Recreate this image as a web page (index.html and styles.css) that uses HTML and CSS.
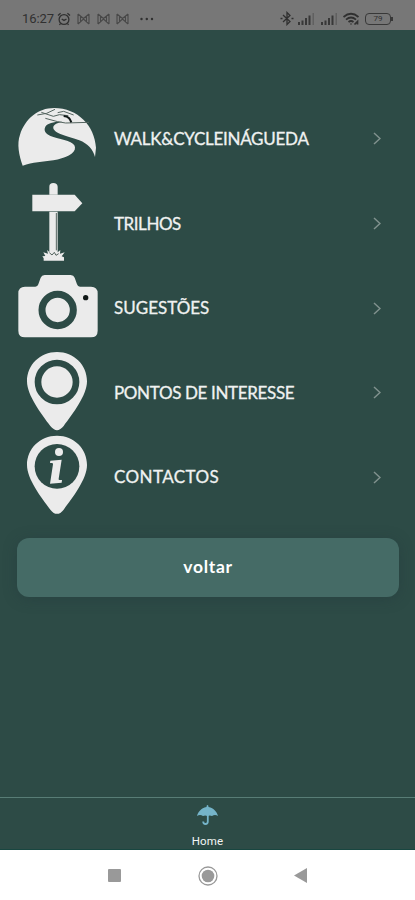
FILE: index.html
```html
<!DOCTYPE html>
<html lang="pt">
  <head>
    <meta charset="UTF-8" />
    <meta name="viewport" content="width=device-width, initial-scale=1.0" />
    <title>Walk&amp;CycleInÁgueda</title>
    <link rel="stylesheet" href="styles.css">
  </head>
  <body>
    <header class="status-bar">
      <span class="time">16:27</span>
      <svg class="alarm" viewBox="0 0 14 14" width="14" height="14">
        <circle cx="7" cy="7.5" r="4.9" />
        <path d="M1 3.6 3.6 1.3M10.4 1.3 13 3.6M4.7 7l2.3 1.4L9.5 7M3.5 11.5l-1 1.5M10.5 11.5l1 1.5" />
      </svg>
      <span class="mails">
        <svg viewBox="0 0 13 12" width="13" height="12"><path d="M1 1v10M12 1v10M1 1l5.5 4.5L12 1M1 11l5.5-5L12 11M3.5 3v7M9.5 3v7" /></svg>
        <svg viewBox="0 0 13 12" width="13" height="12"><path d="M1 1v10M12 1v10M1 1l5.5 4.5L12 1M1 11l5.5-5L12 11M3.5 3v7M9.5 3v7" /></svg>
        <svg viewBox="0 0 13 12" width="13" height="12"><path d="M1 1v10M12 1v10M1 1l5.5 4.5L12 1M1 11l5.5-5L12 11M3.5 3v7M9.5 3v7" /></svg>
      </span>
      <svg class="dots" viewBox="0 0 14 4" width="14" height="4">
        <circle cx="1.5" cy="2" r="1.2" /><circle cx="6.8" cy="2" r="1.2" /><circle cx="12" cy="2" r="1.2" />
      </svg>
      <div class="status-right">
        <svg class="bluetooth" viewBox="0 0 14 15" width="14" height="15">
          <path d="M3 4l7 6.5-3 3v-12l3 3L3 11" /><path d="M.5 7.500h2M11.500 7.500h2" />
        </svg>
        <svg class="signal" viewBox="0 0 18 12" width="18" height="12">
          <path d="M1 9h2v3H1zM4.5 7.5h2V12h-2zM8 5h2v7H8zM11.5 2.5h2V12h-2z" /><path class="weak" d="M15.5 0H17v12h-1.5z" />
        </svg>
        <svg class="signal" viewBox="0 0 18 12" width="18" height="12">
          <path d="M1 9h2v3H1zM4.5 7.5h2V12h-2zM8 5h2v7H8zM11.5 2.5h2V12h-2z" /><path class="weak" d="M15.5 0H17v12h-1.5z" />
        </svg>
        <svg class="wifi" viewBox="0 0 18 14" width="18" height="14">
          <path d="M1.5 5Q9-1.500 16.500 5M4 7.600q5-4.200 10 0M6.500 10q2.500-2 5 0" /><path d="M9 11.500v1M12.500 12.500l3-3v3" />
        </svg>
        <span class="battery">79</span>
      </div>
    </header>

    <main class="content">
      <nav class="menu">
        <a class="menu-item" href="#">
          <svg class="icon" viewBox="21 12 240 240">
            <path d="M38 212C27 181 20 146 30 119 45 72 84 39 132 39c72 0 122 54 126 119l-3 28c-5-22-22-40-47-50-22-8-41-13-57-19-13-6-23-13-21-22 2-7 12-12 27-15-22-1-45 4-51 15-7 14 4 24 22 30 32 10 66 14 67 32 2 20-30 33-65 39-32 5-62 6-92 16z" />
            <path class="line" d="M82 60l28-5 25-12M94 52l36 12 18-5 27 3M106 70l37 10 24 4 70-2M143 53l18-4 30 11" />
            <path class="dark-line" d="M161 63c17 2 19 10 23 19" />
          </svg>
          <span class="label walk">WALK&amp;CYCLEINÁGUEDA</span>
          <svg class="chevron" viewBox="0 0 8 13"><path d="M1 1l6 5.5L1 12" /></svg>
        </a>
        <a class="menu-item" href="#">
          <svg class="icon" viewBox="21 26 240 240">
            <path d="M118 58V34q0-11 12-11t13 11v24z" />
            <path d="M67 58h127l23 26-23 24H67z" />
            <path d="M118 109h25v122l8-7-1 11 14-4-9 12 7 3v10h-61v-7l-4-6 9-1-6-11 14 4-3-11 7 6z" />
            <path class="line" d="M139 113v112M118 232l8 7 7-8 5 9 8-5" />
          </svg>
          <span class="label trilhos">TRILHOS</span>
          <svg class="chevron" viewBox="0 0 8 13"><path d="M1 1l6 5.5L1 12" /></svg>
        </a>
        <a class="menu-item" href="#">
          <svg class="icon" viewBox="21 10 240 240">
            <path d="M45 66h31q7 0 9-7l7-20q3-8 12-8h78q9 0 12 8l7 20q2 7 9 7h33q20 0 20 20v112q0 20-20 20H45q-20 0-20-20V86q0-20 20-20z" />
            <circle class="ring" cx="143" cy="136" r="47" />
            <circle class="dot" cx="227" cy="99" r="8" />
          </svg>
          <span class="label sugestoes">SUGESTÕES</span>
          <svg class="chevron" viewBox="0 0 8 13"><path d="M1 1l6 5.5L1 12" /></svg>
        </a>
        <a class="menu-item" href="#">
          <svg class="icon" viewBox="21 23 240 240">
            <path d="M141 20c51 0 90 39 90 88 0 42-43 98-70 134q-20 25-40 0C94 206 51 150 51 108c0-49 39-88 90-88z" />
            <circle class="ring thin" cx="141" cy="110" r="57" />
          </svg>
          <span class="label pontos">PONTOS DE INTERESSE</span>
          <svg class="chevron" viewBox="0 0 8 13"><path d="M1 1l6 5.5L1 12" /></svg>
        </a>
        <a class="menu-item" href="#">
          <svg class="icon" viewBox="21 22 240 240">
            <path d="M141 18c51 0 90 39 90 88 0 42-43 98-70 134q-20 25-40 0C94 204 51 148 51 106c0-49 39-88 90-88z" />
            <circle class="hole" cx="141" cy="110" r="67" />
            <circle cx="147" cy="67" r="12" />
            <path d="M121 93l34-3-9 57q-1 4 3 4h7l-1 8-35 3 9-58q1-4-4-4h-5z" />
          </svg>
          <span class="label contactos">CONTACTOS</span>
          <svg class="chevron" viewBox="0 0 8 13"><path d="M1 1l6 5.5L1 12" /></svg>
        </a>
      </nav>
      <button class="back-btn">voltar</button>
    </main>

    <footer class="tab-bar">
      <svg viewBox="0 0 21 20" width="21" height="20">
        <path d="M10.5 0q1 0 1 2C17 3 20 7 21 11q-3-2-6 0-2-1-4.500 0Q8 10 6 11q-3-2-6 0C1 7 4 3 9.500 2q0-2 1-2z" />
        <path class="handle" d="M10.800 10v6.500q0 2.500-2.300 2.500t-2.300-2.500" />
      </svg>
      <span>Home</span>
    </footer>

    <div class="system-nav">
      <svg viewBox="0 0 13 13" width="13" height="13"><rect width="13" height="13" rx="1" /></svg>
      <svg viewBox="0 0 20 20" width="20" height="20"><circle class="outer" cx="10" cy="10" r="9" /><circle cx="10" cy="10" r="6.300" /></svg>
      <svg viewBox="0 0 13 15" width="13" height="15"><path d="M0 7.500 13 0v15z" /></svg>
    </div>
  </body>
</html>
```
FILE: styles.css
```css
* {
  box-sizing: border-box;
  margin: 0;
  padding: 0;
}
body {
  display: flex;
  flex-direction: column;
  height: 900px;
  overflow: hidden;
  background: #2d4b46;
  font-family: Lato, 'Open Sans', sans-serif;
}
.status-bar {
  display: flex;
  align-items: center;
  height: 30px;
  padding: 7px 24px 0 22px;
  background: #777;
  color: #303030;
}
.status-bar svg {
  display: block;
  fill: none;
  stroke: #303030;
  stroke-width: 1.3;
}
.time {
  width: 35px;
  font: 13px/16px Roboto, sans-serif;
  letter-spacing: -0.1px;
}
.mails {
  display: flex;
  gap: 6.5px;
  margin-left: 6px;
}
.mails svg {
  stroke: #484848;
  stroke-width: 1.1;
}
.status-bar .dots {
  margin-left: 11px;
  fill: #303030;
  stroke: none;
}
.status-right {
  display: flex;
  align-items: center;
  margin-left: auto;
}
.status-bar .bluetooth {
  margin-right: -2px;
}
.status-bar .signal {
  margin-left: 5px;
  fill: #383838;
  stroke: none;
}
.signal .weak {
  fill: #606060;
}
.status-bar .wifi {
  margin: 0 5px 0 4px;
  stroke-width: 1.7;
}
.battery {
  position: relative;
  width: 26px;
  height: 12px;
  border: 1.5px solid #383838;
  border-radius: 4px;
  font: 8px/10px Roboto, sans-serif;
  text-align: center;
}
.battery::after {
  content: '';
  position: absolute;
  top: 3px;
  right: -3px;
  width: 2px;
  height: 4px;
  background: #383838;
}
.content {
  flex: 1;
  padding: 66.7px 16px 0 17px;
}
.menu-item {
  display: flex;
  align-items: center;
  height: 84.6px;
  padding-right: 18px;
  color: #f0f2f1;
  text-decoration: none;
}
.icon {
  width: 80px;
  height: 80px;
  overflow: visible;
  fill: #ebebeb;
}
.icon .line {
  fill: none;
  stroke: #54645f;
  stroke-width: 3;
}
.icon .dark-line {
  fill: none;
  stroke: #101817;
  stroke-width: 6;
}
.icon .ring {
  fill: none;
  stroke: #2d4b46;
  stroke-width: 21;
}
.icon .thin {
  stroke-width: 20;
}
.icon .dot {
  fill: #101817;
}
.icon .hole {
  fill: #2d4b46;
}
.label {
  margin-left: 17px;
  font-size: 17px;
  line-height: 24px;
  white-space: nowrap;
  -webkit-text-stroke: 0.3px #f0f2f1;
}
.walk {
  letter-spacing: -0.27px;
}
.trilhos {
  letter-spacing: -0.45px;
}
.pontos {
  letter-spacing: -0.35px;
}
.contactos {
  letter-spacing: 0.4px;
}
.chevron {
  width: 8px;
  height: 13px;
  margin-left: auto;
  fill: none;
  stroke: #81928e;
  stroke-width: 1.5;
}
.back-btn {
  display: block;
  width: 382px;
  height: 59px;
  margin-top: 18px;
  padding-bottom: 2px;
  border: none;
  border-radius: 12px;
  background: #456b66;
  box-shadow: 0 2px 14px rgba(35, 55, 60, 0.4);
  color: #fff;
  font-family: inherit;
  font-size: 17.5px;
  font-weight: bold;
  letter-spacing: 0.7px;
}
.tab-bar {
  display: flex;
  flex-direction: column;
  align-items: center;
  height: 53px;
  padding-top: 7px;
  border-top: 1px solid #587d76;
  border-bottom: 1px solid #184640;
  color: #f4f6f5;
  font: 11.5px/14px Roboto, sans-serif;
}
.tab-bar svg {
  flex-shrink: 0;
  fill: #75b4c9;
}
.tab-bar span {
  margin-top: 9px;
  letter-spacing: 0.2px;
}
.tab-bar .handle {
  fill: none;
  stroke: #75b4c9;
  stroke-width: 1.8;
}
.system-nav {
  display: flex;
  align-items: center;
  justify-content: space-between;
  height: 50px;
  padding: 1px 108px 0 108px;
  background: #fff;
}
.system-nav svg {
  fill: #999;
}
.system-nav .outer {
  fill: none;
  stroke: #999;
  stroke-width: 1.3;
}
```
